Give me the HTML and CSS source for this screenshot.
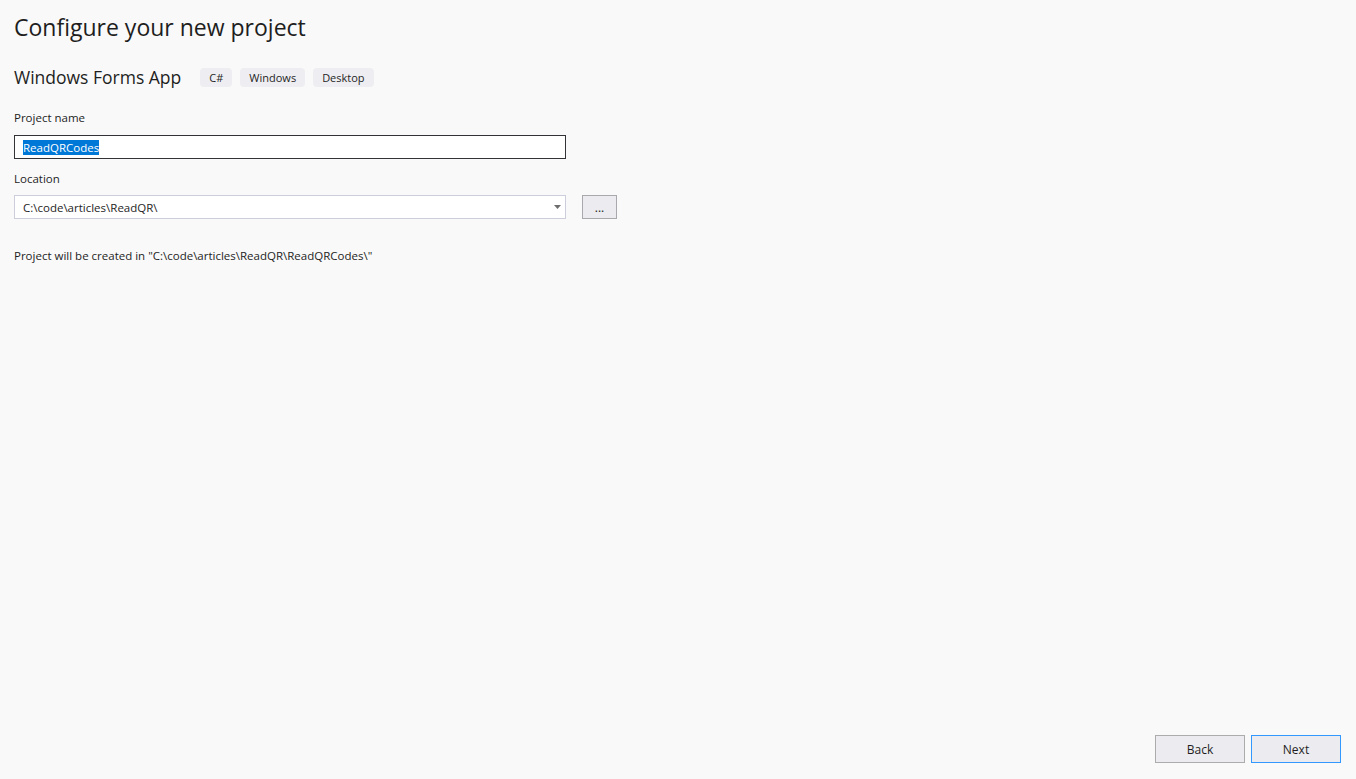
FILE: index.html
```html
<!DOCTYPE html>
<html lang="en">
<head>
    <meta charset="UTF-8">
    <title>Configure your new project</title>
    <link rel="stylesheet" href="styles.css">
</head>
<body>

<div class="page">
    <h1 class="title">Configure your new project</h1>

    <div class="template-row">
        <span class="template-name">Windows Forms App</span>
        <span class="tag">C#</span>
        <span class="tag">Windows</span>
        <span class="tag">Desktop</span>
    </div>

    <label class="field-label">Project name</label>
    <div class="text-input"><span class="selected">ReadQRCodes</span></div>

    <label class="field-label">Location</label>
    <div class="location-row">
        <div class="combo">
            <span>C:\code\articles\ReadQR\</span>
            <svg class="combo-arrow" width="7" height="4" viewBox="0 0 7 4">
                <path d="M0 0 H7 L3.5 4 Z" fill="#6d6d6d"/>
            </svg>
        </div>
        <button class="browse">...</button>
    </div>

    <p class="path-note">Project will be created in "C:\code\articles\ReadQR\ReadQRCodes\"</p>

    <div class="footer">
        <button class="btn">Back</button>
        <button class="btn btn-default">Next</button>
    </div>
</div>

</body>
</html>
```

FILE: styles.css
```css
html, body {
    margin: 0;
    padding: 0;
    height: 100%;
    background-color: #f9f9f9;
    color: #1e1e1e;
    font-family: "Open Sans", "Noto Sans", sans-serif;
}

.page {
    display: flex;
    flex-direction: column;
    align-items: flex-start;
    height: 100%;
    box-sizing: border-box;
    padding: 0 15px 16px 14px;
}

.title {
    margin: 12px 0 0 0;
    font-size: 23px;
    font-weight: 400;
    line-height: 30px;
}

.template-row {
    display: flex;
    align-items: center;
    margin-top: 23px;
    margin-bottom: 9px;
}

.template-name {
    font-size: 17.5px;
    margin-right: 19px;
}

.tag {
    font-size: 11px;
    background-color: #eeeef2;
    border-radius: 4px;
    padding: 2px 9px;
    margin-right: 8px;
    line-height: 15px;
}

.field-label {
    font-size: 11.5px;
    margin-top: 12px;
    line-height: 16px;
}

.text-input {
    width: 542px;
    height: 22px;
    margin-top: 9px;
    border: 1px solid #333337;
    background-color: #fff;
    display: flex;
    align-items: center;
    padding-left: 8px;
    font-size: 11.5px;
}

.selected {
    background-color: #0078d7;
    color: #fff;
    line-height: 15px;
}

.location-row {
    display: flex;
    margin-top: 8px;
}

.combo {
    width: 542px;
    height: 22px;
    border: 1px solid #cccedb;
    background-color: #fff;
    display: flex;
    align-items: center;
    justify-content: space-between;
    padding-left: 8px;
    font-size: 11.5px;
}

.combo-arrow {
    margin-right: 4px;
}

.browse {
    margin-left: 16px;
    width: 35px;
    height: 24px;
    background-color: #ececf0;
    border: 1px solid #a8a8ad;
    font-family: inherit;
    font-size: 12px;
    padding: 0;
    color: #1e1e1e;
}

.path-note {
    font-size: 11.5px;
    margin: 29px 0 0 0;
}

.footer {
    margin-top: auto;
    align-self: flex-end;
    display: flex;
    gap: 6px;
}

.btn {
    width: 90px;
    height: 28px;
    background-color: #ececf0;
    border: 1px solid #acacac;
    font-family: inherit;
    font-size: 12px;
    color: #1e1e1e;
    padding: 0;
}

.btn-default {
    border-color: #3399ff;
}
```
